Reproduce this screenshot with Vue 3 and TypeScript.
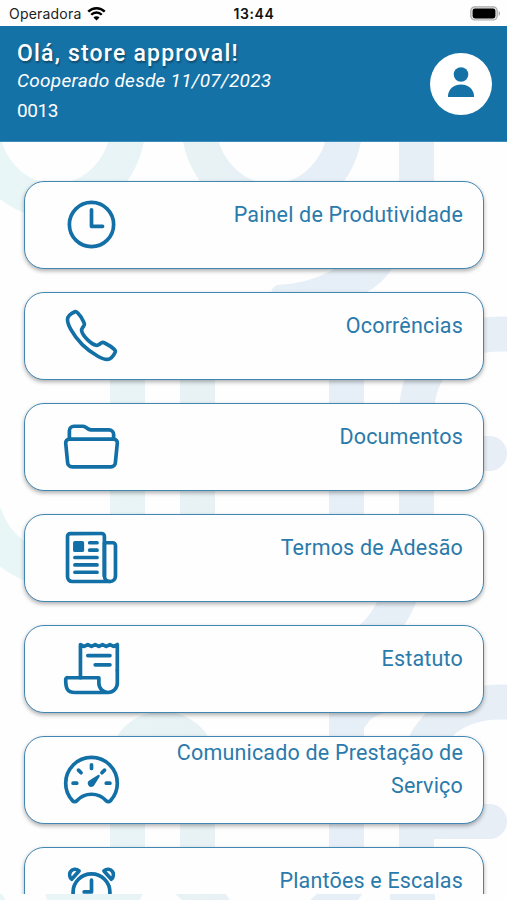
<script setup lang="ts">
interface Shape {
  d: string
  solid?: boolean
}

interface MenuItem {
  label: string
  icon: Shape[]
}

const items: MenuItem[] = [
  {
    label: 'Painel de Produtividade',
    icon: [
      { d: 'M256 64C150 64 64 150 64 256s86 192 192 192 192-86 192-192S362 64 256 64z' },
      { d: 'M256 128v144h96' },
    ],
  },
  {
    label: 'Ocorrências',
    icon: [
      { d: 'M451 374c-15.88-16-54.34-39.35-73-48.76-24.3-12.24-26.3-13.24-45.4.95-12.74 9.47-21.21 17.93-36.12 14.75s-47.31-21.11-75.68-49.39-47.34-61.62-50.53-76.48 5.41-23.23 14.79-36c13.22-18 12.22-21 .92-45.3-8.81-18.9-32.84-57-48.9-72.8C119.9 44 119.9 47 108.83 51.6A160.15 160.15 0 0083 65.37C67 76 58.12 84.83 51.91 98.1s-9 44.38 23.07 102.64 54.57 88.05 101.14 134.49S258.5 406.64 310.85 436c64.76 36.27 89.6 29.2 102.91 23s22.18-15 32.83-31a159.09 159.09 0 0013.8-25.8C465 391.17 468 391.17 451 374z' },
    ],
  },
  {
    label: 'Documentos',
    icon: [
      { d: 'M64 192v-72a40 40 0 0140-40h75.89a40 40 0 0122.19 6.72l27.84 18.56a40 40 0 0022.19 6.72H408a40 40 0 0140 40v40' },
      { d: 'M479.9 226.55L463.68 392a40 40 0 01-39.93 40H88.25a40 40 0 01-39.93-40L32.1 226.55A32 32 0 0164 192h384.1a32 32 0 0131.8 34.55z' },
    ],
  },
  {
    label: 'Termos de Adesão',
    icon: [
      { d: 'M368 415.86V72a24.07 24.07 0 00-24-24H72a24.07 24.07 0 00-24 24v352a40.12 40.12 0 0040 40h328' },
      { d: 'M416 464a48 48 0 01-48-48V128h72a24 24 0 0124 24v264a48 48 0 01-48 48z' },
      { d: 'M240 128h64M240 192h64M112 256h192M112 320h192M112 384h192' },
      { d: 'M176 208h-64a16 16 0 01-16-16v-64a16 16 0 0116-16h64a16 16 0 0116 16v64a16 16 0 01-16 16z', solid: true },
    ],
  },
  {
    label: 'Estatuto',
    icon: [
      { d: 'M160 336V48l32 16 32-16 31.94 16 32.37-16L320 64l31.79-16 31.93 16L416 48l32.01 16L480 48v224' },
      { d: 'M480 272v112a80 80 0 01-80 80 80 80 0 01-80-80v-48H48a15.86 15.86 0 00-16 16c0 64 6.74 112 80 112h288' },
      { d: 'M224 144h192M288 224h128' },
    ],
  },
  {
    label: 'Comunicado de Prestação de Serviço',
    icon: [
      { d: 'M256 64C132.3 64 32 164.2 32 287.9a223.18 223.18 0 0056.3 148.5c1.1 1.2 2.1 2.4 3.2 3.5a25.19 25.19 0 0037.1-.1 173.13 173.13 0 01254.8 0 25.19 25.19 0 0037.1.1l3.2-3.5A223.18 223.18 0 00480 287.9C480 164.2 379.7 64 256 64z' },
      { d: 'M256 128v32M416 288h-32M128 288H96M165.49 197.49l-22.63-22.63M346.51 197.49l22.63-22.63' },
      { d: 'M326.1 231.9l-47.5 75.5a31 31 0 01-7 7 30.11 30.11 0 01-35-49l75.5-47.5a10.23 10.23 0 0111.7 0 10.06 10.06 0 012.3 14z', solid: true },
    ],
  },
  {
    label: 'Plantões e Escalas',
    icon: [
      { d: 'M256 112a160 160 0 100 320 160 160 0 100-320z' },
      { d: 'M256 166v102h-64' },
      { d: 'M148 86C124 64 88 68 74 92c-14 22-8 50 10 66zM364 86c24-22 60-18 74 6 14 22 8 50-10 66z' },
    ],
  },
]
</script>

<template>
  <div class="screen">
    <div class="statusbar">
      <div class="carrier">
        <span>Operadora</span>
        <svg class="wifi" viewBox="0 0 18 14">
          <path d="M1.2 5.2a11 11 0 0 1 15.6 0M4 8.2a7 7 0 0 1 10 0" />
          <path class="wifi-dot" d="M9 13.6 6.1 10.7a4.1 4.1 0 0 1 5.8 0z" />
        </svg>
      </div>
      <span class="time">13:44</span>
      <svg class="battery" viewBox="0 0 31 15">
        <rect class="battery-case" x="0.8" y="0.8" width="26.4" height="13.2" rx="4" />
        <rect x="2.6" y="2.4" width="22.8" height="10" rx="2.4" />
        <path class="battery-tip" d="M28.6 5.2c1.9.6 1.9 3.9 0 4.5z" />
      </svg>
    </div>

    <header class="header">
      <div class="greeting">
        <h1>Olá, store approval!</h1>
        <em>Cooperado desde 11/07/2023</em>
        <span>0013</span>
      </div>
      <div class="avatar">
        <svg viewBox="0 0 26 30">
          <circle cx="13" cy="7.5" r="7.3" />
          <path d="M0 30v-1.5C.6 22 6 17.6 13 17.6S25.4 22 26 28.5V30z" />
        </svg>
      </div>
    </header>

    <main class="content">
      <svg class="backdrop" viewBox="0 142 507 758">
        <defs>
          <linearGradient id="tint" gradientUnits="userSpaceOnUse" x1="0" y1="0" x2="507" y2="0">
            <stop offset="0" stop-color="#e9f6f6" />
            <stop offset="0.42" stop-color="#e8f2f5" />
            <stop offset="0.6" stop-color="#e6eff7" />
            <stop offset="1" stop-color="#e7eef6" />
          </linearGradient>
        </defs>
        <g class="rings">
          <ellipse cx="55" cy="124" rx="73" ry="77" />
          <ellipse cx="272" cy="124" rx="73" ry="77" />
          <path d="M416.5 130v60M-20 500c8 35 30 65 75 70" />
          <path d="M127.5 530V370c0-45 70-45 70 0v160" />
          <path d="M127.5 870V763c0-45 70-45 70 0v107" />
          <path d="M346.5 320V520M346.5 690V870" />
          <path d="M416.5 520V415c0-50 35-81 84-81h15" />
          <path d="M416.5 870V783c0-50 35-81 84-81h15" />
          <path class="round" d="M416.5 453.5h73M416.5 821.5h73" />
        </g>
        <g class="patches">
          <path d="M271 293q1-6 6-8 36-2 60-18h56q-10 17-28 26z" />
          <path d="M378 600h39q-5 14-14 27h-45q14-13 20-27z" />
          <path d="M364 710h31q-18 4-25 10l-6 8z" />
          <path d="M0 893q4 3 6 7H0zM45 893h98l-3 7H47zM174 893h51l5 7h-48zM318 893h45l-5 7h-48zM390 893h45v7h-45z" />
        </g>
      </svg>

      <nav class="menu">
        <a v-for="item in items" :key="item.label" class="card">
          <svg class="icon" viewBox="0 0 512 512">
            <path v-for="(shape, i) in item.icon" :key="i" :class="{ solid: shape.solid }" :d="shape.d" />
          </svg>
          <span class="label">{{ item.label }}</span>
        </a>
      </nav>
    </main>
  </div>
</template>

<style>
body {
  margin: 0;
  background: #fefefe;
}
</style>

<style scoped>
.screen {
  display: flex;
  flex-direction: column;
  width: 507px;
  height: 900px;
  overflow: hidden;
  font-family: Roboto, 'Liberation Sans', sans-serif;
}

.statusbar {
  display: grid;
  grid-template-columns: 1fr auto 1fr;
  align-items: center;
  flex: none;
  height: 26px;
  padding: 0 6px 0 9px;
  box-sizing: border-box;
  font-family: Inter, sans-serif;
  font-size: 14px;
  color: #222;
}

.carrier {
  display: flex;
  align-items: center;
  gap: 6px;
  letter-spacing: 0.2px;
}

.wifi {
  width: 19px;
  height: 15px;
  fill: none;
  stroke: #000;
  stroke-width: 2.3;
}

.wifi-dot {
  fill: #000;
  stroke: none;
}

.time {
  margin-right: 2px;
  font-weight: 600;
  color: #111;
  letter-spacing: 0.6px;
}

.battery {
  justify-self: end;
  width: 31px;
  height: 15px;
}

.battery-case {
  fill: #e4e4e4;
  stroke: #aaa;
  stroke-width: 1.2;
}

.battery-tip {
  fill: #aaa;
}

.header {
  display: flex;
  justify-content: space-between;
  flex: none;
  height: 116px;
  box-sizing: border-box;
  padding: 14px 15px 0 17px;
  background: #1572a7;
  border-bottom: 1px solid #3f8cb8;
  color: #fff;
}

.greeting {
  display: flex;
  flex-direction: column;
  font-size: 19px;
}

.greeting h1 {
  margin: 0;
  font-size: 23px;
  font-weight: 500;
  line-height: 28px;
  letter-spacing: 1.2px;
  text-shadow: 1px 2px 2px rgba(0, 0, 0, 0.35);
}

.greeting em {
  line-height: 26px;
  letter-spacing: 0.28px;
}

.greeting span {
  margin-top: 3px;
  line-height: 28px;
  letter-spacing: -0.4px;
}

.avatar {
  display: flex;
  justify-content: center;
  width: 62px;
  height: 62px;
  margin-top: 13px;
  border-radius: 50%;
  background: #fff;
}

.avatar svg {
  width: 26px;
  height: 30px;
  margin-top: 14px;
  fill: #1572a7;
}

.content {
  position: relative;
  flex: 1;
  min-height: 0;
}

.backdrop {
  position: absolute;
  inset: 0;
  width: 507px;
  height: 758px;
}

.rings {
  fill: none;
  stroke: url(#tint);
  stroke-width: 35;
}

.round {
  stroke-linecap: round;
}

.patches {
  fill: url(#tint);
}

.menu {
  position: relative;
  display: flex;
  flex-direction: column;
  gap: 23px;
  height: 752px;
  box-sizing: border-box;
  padding: 39px 23px 0 24px;
  overflow: hidden;
}

.card {
  display: flex;
  align-items: center;
  justify-content: space-between;
  flex: none;
  height: 88px;
  box-sizing: border-box;
  padding: 0 20px 1px 37px;
  border: 1.5px solid #4187b3;
  border-radius: 20px;
  background: #fefefe;
  box-shadow: 0 2px 4px rgba(0, 0, 0, 0.32);
}

.icon {
  width: 59px;
  height: 59px;
  fill: none;
  stroke: #1270a6;
  stroke-width: 32;
  stroke-linecap: round;
  stroke-linejoin: round;
}

.icon .solid {
  fill: #1270a6;
  stroke: none;
}

.label {
  width: 310px;
  margin-bottom: 21px;
  font-size: 21.5px;
  line-height: 33px;
  letter-spacing: 0.18px;
  text-align: right;
  color: #2a7aab;
}
</style>
